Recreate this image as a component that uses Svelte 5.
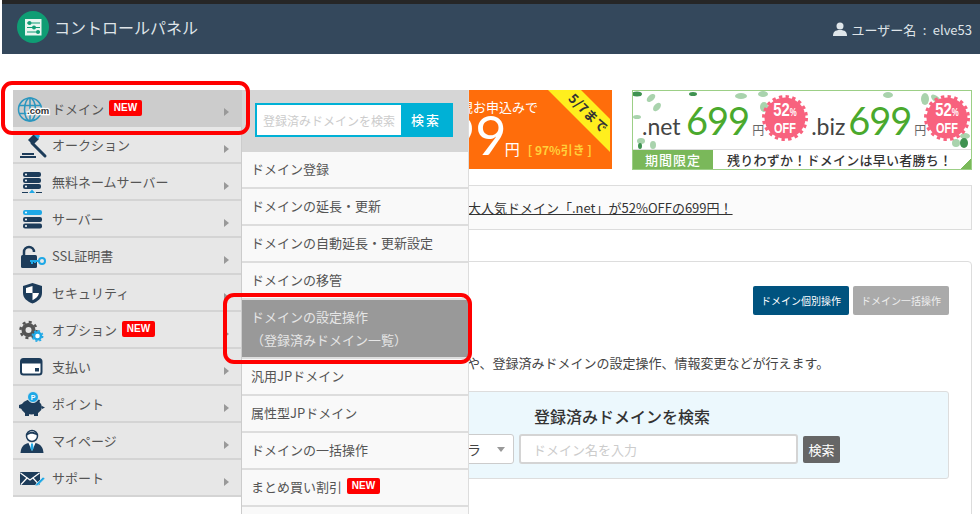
<script>
	const sideItems = [
		{ icon: 'globe', label: 'ドメイン', isNew: true, active: true },
		{ icon: 'hammer', label: 'オークション' },
		{ icon: 'dns', label: '無料ネームサーバー' },
		{ icon: 'server', label: 'サーバー' },
		{ icon: 'lock', label: 'SSL証明書' },
		{ icon: 'shield', label: 'セキュリティ' },
		{ icon: 'gears', label: 'オプション', isNew: true },
		{ icon: 'card', label: '支払い' },
		{ icon: 'pig', label: 'ポイント' },
		{ icon: 'person', label: 'マイページ' },
		{ icon: 'mail', label: 'サポート' }
	];

	const subItems = [
		{ label: 'ドメイン登録' },
		{ label: 'ドメインの延長・更新' },
		{ label: 'ドメインの自動延長・更新設定' },
		{ label: 'ドメインの移管' },
		{ label: 'ドメインの設定操作', sub: '（登録済みドメイン一覧）', active: true },
		{ label: '汎用JPドメイン' },
		{ label: '属性型JPドメイン' },
		{ label: 'ドメインの一括操作' },
		{ label: 'まとめ買い割引', isNew: true },
		{ label: '' }
	];

	const navy = '#1d3c5a';
	const sky = '#1fa8e6';
</script>

{#snippet icon(name)}
	<svg class="ico" viewBox="0 0 36 35" width="36" height="35" aria-hidden="true">
		{#if name === 'globe'}
			<g fill="none" stroke="#2b96bf" stroke-width="1.5">
				<circle cx="14" cy="18.5" r="11.5" />
				<ellipse cx="14" cy="18.5" rx="5.5" ry="11.5" />
				<path d="M14 7v23M3 14.5h22M3 22.5h22" />
			</g>
			<text x="11" y="23" class="com">.com</text>
		{:else if name === 'hammer'}
			<path d="M16 16l13 13" stroke={navy} stroke-width="3" stroke-linecap="round" />
			<path d="M12 13l6-6 5 5-6 6z" fill={navy} />
			<path d="M17 7l3-2 4 4-2 3z" fill={sky} />
			<path d="M6 26h12v2H6zM4 29h16v2H4z" fill={navy} />
		{:else if name === 'dns'}
			<g fill={navy}>
				<rect x="7" y="8" width="18" height="5" rx="2" />
				<rect x="7" y="14" width="18" height="5" rx="2" />
				<rect x="7" y="20" width="18" height="5" rx="2" />
				<path d="M6 28h6v1H6zM20 28h6v1h-6z" />
			</g>
			<g fill="#fff">
				<circle cx="10" cy="10.5" r="1" />
				<circle cx="10" cy="16.5" r="1" />
				<circle cx="10" cy="22.5" r="1" />
			</g>
			<path d="M16 25.5l3 3.5h-6z" fill={sky} />
		{:else if name === 'server'}
			<rect x="7" y="9" width="19" height="5" rx="2" fill={sky} />
			<rect x="7" y="16" width="19" height="5" rx="2" fill={navy} />
			<rect x="7" y="22.5" width="19" height="5" rx="2" fill={navy} />
			<g fill="#fff">
				<circle cx="10" cy="11.5" r="1" />
				<circle cx="10" cy="18.5" r="1" />
				<circle cx="10" cy="25" r="1" />
			</g>
		{:else if name === 'lock'}
			<path d="M8 18v-4a5 5 0 0 1 10 0" fill="none" stroke={navy} stroke-width="2.5" />
			<rect x="5" y="17" width="16" height="13" rx="1.5" fill={navy} />
			<circle cx="26" cy="23" r="3" fill="none" stroke={sky} stroke-width="2" />
			<path d="M23 23h-9M16 23v3M19 23v2" stroke={sky} stroke-width="2" fill="none" />
		{:else if name === 'shield'}
			<path d="M16.5 8l9.5 3v7c0 5-4 8.5-9.500 10.500C11 26.500 7 23 7 18v-7z" fill={navy} />
			<path d="M16.5 11v7H10v-5zM16.500 18H23c-.5 3.500-3 5.500-6.500 7.200z" fill="#fff" />
		{:else if name === 'gears'}
			<circle cx="12.5" cy="18" r="5" fill="none" stroke="#555" stroke-width="4" />
			<circle cx="12.5" cy="18" r="8" fill="none" stroke="#555" stroke-width="2.5" stroke-dasharray="3 3.280" />
			<circle cx="21.5" cy="24" r="3.500" fill="#fff" stroke={sky} stroke-width="2.5" />
			<circle cx="21.5" cy="24" r="5.200" fill="none" stroke={sky} stroke-width="1.5" stroke-dasharray="2 2.080" />
		{:else if name === 'card'}
			<rect x="5" y="10" width="20.5" height="15.5" rx="2.5" fill="#fff" stroke={navy} stroke-width="2" />
			<rect x="5" y="11" width="20" height="3.5" fill={navy} />
			<rect x="19" y="19" width="4" height="3.5" fill={navy} />
		{:else if name === 'pig'}
			<ellipse cx="15.5" cy="21" rx="10.5" ry="7.5" fill={navy} />
			<path d="M3 19l3-1v5l-3-1zM26 20l3 1.500-3 1.500zM9 26h4v4H9zM18 26h4v4h-4zM20 13l4 1-1 4z" fill={navy} />
			<circle cx="17" cy="11" r="5.5" fill={sky} stroke="#e7e7e7" stroke-width="1" />
			<text x="14.8" y="13.5" class="coin">P</text>
		{:else if name === 'person'}
			<circle cx="16" cy="13" r="5.5" fill="#fff" stroke={navy} stroke-width="1.5" />
			<path d="M10.5 12.5c1-5 10-5 11 0-3-1.500-6-2-7.500-1.500z" fill={navy} />
			<path d="M4.5 30c.5-6 3-9 8-10h7c5 1 7.500 4 8 10z" fill={navy} />
			<path d="M12.5 20h7l-3.500 8z" fill="#fff" />
			<path d="M15 20.5h2l.5 5-1.500 2.500-1.500-2.500z" fill={sky} />
		{:else if name === 'mail'}
			<rect x="4" y="12" width="20" height="13" rx="1" fill={navy} />
			<path d="M4.5 13l9.5 7 9.500-7M5 24.500l6.500-7M23 24.500l-6.500-7" fill="none" stroke="#fff" stroke-width="1.2" />
			<path d="M20 24l7-7 2 1.500-7 7-3 .5z" fill={sky} stroke="#e7e7e7" stroke-width=".6" />
		{/if}
	</svg>
{/snippet}

{#snippet burst()}
	<svg class="burst" viewBox="0 0 46 46" width="46" height="46" aria-hidden="true">
		<circle cx="23" cy="23" r="20.5" fill="#f8627e" />
		<circle cx="23" cy="23" r="21.5" fill="none" stroke="#f8627e" stroke-width="3" stroke-dasharray="3.400 3.350" />
	</svg>
{/snippet}

{#snippet offer()}
	<div class="off">
		{@render burst()}
		<span class="off-pct">52<small>%</small></span>
		<span class="off-word">OFF</span>
	</div>
{/snippet}

<div class="page">
	<header class="top">
		<div class="brand">
			<svg viewBox="0 0 32 32" width="32" height="32" aria-hidden="true">
				<circle cx="16" cy="16" r="16" fill="#0f9d74" />
				<rect x="8" y="8" width="16.5" height="16.5" fill="#e9f6f0" />
				<path d="M10 12h13M10 16.500h13M10 21h13" stroke="#0f9d74" stroke-width="1" />
				<circle cx="12.5" cy="12" r="2" fill="#0f9d74" />
				<circle cx="17" cy="16.5" r="2" fill="#0f9d74" />
				<circle cx="21" cy="21" r="2" fill="#0f9d74" />
			</svg>
			<span>コントロールパネル</span>
		</div>
		<div class="user">
			<svg viewBox="0 0 14 14" width="14" height="14" aria-hidden="true">
				<circle cx="7" cy="4" r="3.5" fill="#dfe6ea" />
				<path d="M0 14c0-4 2-6 7-6s7 2 7 6z" fill="#dfe6ea" />
			</svg>
			<span>ユーザー名 : elve53</span>
		</div>
	</header>

	<main class="main">
		<div class="banners">
			<div class="promo">
				<p class="promo-lead">新規お申込みで</p>
				<p class="promo-price"><b>99</b><i>円</i><em>[ 97%引き ]</em></p>
				<svg class="ribbon" viewBox="0 0 64 62" width="64" height="62" aria-hidden="true">
					<path d="M0 0h33l29 29v33z" fill="#ffef1e" />
				</svg>
				<span class="ribbon-text">5/7まで</span>
			</div>
			<div class="sale">
				<svg class="leaves" viewBox="0 0 338 60" width="338" height="60" aria-hidden="true">
					<g fill="#a9d3ad">
						<ellipse cx="24" cy="16" rx="5" ry="3" transform="rotate(-50 24 16)" />
						<ellipse cx="18" cy="7" rx="5" ry="3" transform="rotate(-40 18 7)" />
						<ellipse cx="131" cy="16" rx="4" ry="5" />
						<ellipse cx="108" cy="5" rx="6" ry="3" />
						<ellipse cx="130" cy="3" rx="5" ry="3" />
						<ellipse cx="292" cy="8" rx="4" ry="6" />
						<ellipse cx="303" cy="8" rx="6" ry="3" transform="rotate(40 303 8)" />
						<ellipse cx="255" cy="4" rx="5" ry="3" />
						<ellipse cx="332" cy="45" rx="5" ry="3" />
						<ellipse cx="323" cy="52" rx="4" ry="4" />
						<ellipse cx="8" cy="50" rx="4" ry="3" />
						<ellipse cx="20" cy="54" rx="3" ry="4" />
						<ellipse cx="4" cy="26" rx="4" ry="2" />
					</g>
					<g fill="#3f9251">
						<ellipse cx="4" cy="3" rx="5" ry="2.5" />
						<ellipse cx="60" cy="3" rx="4" ry="2" />
						<ellipse cx="331" cy="52" rx="4" ry="5" />
						<ellipse cx="7" cy="55" rx="2" ry="3" />
					</g>
				</svg>
				<div class="sale-row">
					<span class="tld">.net</span><span class="num">699</span><span class="yen">円</span>
					{@render offer()}
					<span class="tld biz">.biz</span><span class="num">699</span><span class="yen">円</span>
					{@render offer()}
				</div>
				<div class="sale-foot">
					<span class="sale-tag">期間限定</span>
					<span class="sale-copy">残りわずか！ドメインは早い者勝ち！</span>
				</div>
			</div>
		</div>

		<div class="notice"><a href="#top">大人気ドメイン「.net」が52%OFFの699円！</a></div>

		<section class="panel">
			<div class="tabs">
				<button class="tab on">ドメイン個別操作</button>
				<button class="tab">ドメイン一括操作</button>
			</div>
			<p class="desc">や、登録済みドメインの設定操作、情報変更などが行えます。</p>
			<div class="finder">
				<h2>登録済みドメインを検索</h2>
				<div class="finder-row">
					<div class="select"><span>ラ</span><i></i></div>
					<input class="domain" type="text" placeholder="ドメイン名を入力" />
					<button class="go">検索</button>
				</div>
			</div>
		</section>
	</main>

	<nav class="side">
		{#each sideItems as item}
			<div class="side-row" class:active={item.active}>
				{@render icon(item.icon)}
				<span class="side-label">{item.label}</span>
				{#if item.isNew}<span class="new">NEW</span>{/if}
				<span class="arrow"></span>
			</div>
		{/each}
	</nav>

	<div class="sub">
		<div class="sub-search">
			<div class="sub-box">
				<input type="text" placeholder="登録済みドメインを検索" />
				<span>検索</span>
			</div>
		</div>
		{#each subItems as item}
			<div class="sub-row" class:active={item.active}>
				<div class="sub-line">
					<span>{item.label}</span>
					{#if item.isNew}<span class="new">NEW</span>{/if}
				</div>
				{#if item.sub}<div class="sub-line">{item.sub}</div>{/if}
			</div>
		{/each}
	</div>

	<div class="ring ring-a"></div>
	<div class="ring ring-b"></div>
</div>

<style>
	:global(body) {
		margin: 0;
		background: #fff;
	}

	.page {
		position: relative;
		width: 980px;
		height: 514px;
		overflow: hidden;
		font-family: 'Noto Sans CJK JP', 'Liberation Sans', sans-serif;
		font-size: 13px;
		color: #444;
	}

	.top {
		display: flex;
		align-items: center;
		justify-content: space-between;
		box-sizing: border-box;
		height: 54px;
		margin-left: 2px;
		padding: 0 8px 0 15px;
		background: linear-gradient(#262626 4px, #34485c 4px);
		color: #dfe4e8;
	}

	.brand {
		display: flex;
		align-items: center;
		gap: 5px;
		font-size: 16px;
	}

	.user {
		display: flex;
		align-items: center;
		gap: 5px;
		margin-top: 4px;
		word-spacing: 3.5px;
	}

	.main {
		padding: 36px 8px 0 272px;
	}

	.banners {
		display: flex;
		gap: 20px;
	}

	.promo {
		position: relative;
		flex: none;
		box-sizing: border-box;
		width: 340px;
		height: 79px;
		padding-left: 175px;
		background: #ff6d0b;
		color: #fff;
		overflow: hidden;
	}

	.promo p {
		margin: 0;
		white-space: nowrap;
	}

	.promo-lead {
		margin-top: 7px !important;
		font-size: 13px;
		line-height: 20px;
	}

	.promo-price {
		display: flex;
		align-items: baseline;
		margin-top: -9px !important;
		margin-left: -3px !important;
		height: 54px;
	}

	.promo-price b {
		font-family: 'Lato', sans-serif;
		font-size: 54px;
		font-weight: 400;
		line-height: 54px;
	}

	.promo-price i {
		margin-left: -2px;
		font-size: 15px;
		font-style: normal;
	}

	.promo-price em {
		margin-left: 8px;
		font-size: 12px;
		font-weight: 700;
		font-style: normal;
		color: #ffd03b;
	}

	.ribbon {
		position: absolute;
		top: 0;
		right: 0;
	}

	.ribbon-text {
		position: absolute;
		top: 14px;
		right: -1px;
		transform: rotate(45deg);
		font-size: 13px;
		font-weight: 700;
		line-height: 18px;
		letter-spacing: 0.5px;
		color: #333;
		white-space: nowrap;
	}

	.sale {
		position: relative;
		flex: none;
		display: flex;
		flex-direction: column;
		box-sizing: border-box;
		width: 340px;
		height: 80px;
		border: 1px solid #9ccf86;
		background: #fff;
		overflow: hidden;
	}

	.leaves {
		position: absolute;
		top: 0;
		left: 0;
	}

	.sale-row {
		position: relative;
		display: flex;
		align-items: baseline;
		height: 59px;
		padding-left: 9px;
		box-sizing: border-box;
		padding-top: 7px;
		white-space: nowrap;
	}

	.tld {
		width: 44px;
		font-family: 'Lato', sans-serif;
		font-size: 23px;
		color: #444;
	}

	.biz {
		margin-left: 3px;
		width: 37px;
	}

	.num {
		font-family: 'Lato', sans-serif;
		font-size: 38px;
		line-height: 44px;
		letter-spacing: -1px;
		color: #4aa92d;
	}

	.yen {
		margin-left: 3px;
		font-size: 12px;
		color: #666;
	}

	.off {
		position: relative;
		flex: none;
		align-self: flex-start;
		width: 46px;
		height: 46px;
		margin: -3px 0 0 -2px;
		color: #fff;
		text-align: center;
		font-weight: 700;
	}

	.burst {
		position: absolute;
		top: 0;
		left: 0;
	}

	.off-pct,
	.off-word {
		position: relative;
		display: block;
		font-family: 'Liberation Sans', sans-serif;
		transform: scaleX(0.78);
	}

	.off-pct {
		padding-top: 5px;
		font-size: 19px;
		line-height: 19px;
	}

	.off-pct small {
		font-size: 10px;
	}

	.off-word {
		font-size: 14px;
		line-height: 13px;
	}

	.sale-foot {
		position: relative;
		display: flex;
		flex: 1;
		border-top: 1px solid #ddd;
		background: linear-gradient(135deg, #fff 97%, #7ab95a 97%);
	}

	.sale-tag {
		width: 80px;
		background: #7ab85a;
		color: #fff;
		font-size: 13px;
		font-weight: 500;
		letter-spacing: 1px;
		line-height: 19px;
		text-align: center;
	}

	.sale-copy {
		margin-left: 14px;
		font-size: 13px;
		font-weight: 500;
		color: #333;
		line-height: 19px;
		letter-spacing: 0.25px;
	}

	.notice {
		box-sizing: border-box;
		height: 45px;
		margin-top: 15px;
		padding-left: 195px;
		border: 1px solid #ddd;
		background: #fbfbfb;
		line-height: 44px;
	}

	.notice a {
		color: #333;
		text-decoration: underline;
	}

	.panel {
		box-sizing: border-box;
		height: 300px;
		margin-top: 31px;
		padding: 24px 22px 0;
		border: 1px solid #ddd;
		border-radius: 4px;
	}

	.tabs {
		display: flex;
		justify-content: flex-end;
		gap: 4px;
	}

	.tab {
		width: 96px;
		height: 29px;
		padding: 0;
		border: 0;
		border-radius: 2px;
		background: #aaa;
		color: #eee;
		font: inherit;
		font-size: 10px;
	}

	.tab.on {
		background: #00537f;
		color: #fff;
	}

	.desc {
		margin: 38px 0 0 172px;
		line-height: 20px;
		color: #444;
		white-space: nowrap;
	}

	.finder {
		box-sizing: border-box;
		width: 654px;
		height: 88px;
		margin-top: 18px;
		padding-top: 12px;
		border: 1px solid #ddd;
		border-radius: 3px;
		background: #ecf8fd;
	}

	.finder h2 {
		margin: 0;
		color: #333;
		font-size: 16px;
		font-weight: 500;
		line-height: 24px;
		text-align: center;
	}

	.finder-row {
		display: flex;
		align-items: flex-start;
		gap: 5px;
		margin: 6px 0 0 12px;
	}

	.select {
		display: flex;
		align-items: center;
		justify-content: flex-end;
		gap: 16px;
		box-sizing: border-box;
		width: 206px;
		height: 30px;
		padding-right: 8px;
		border: 1px solid #ccc;
		border-radius: 3px;
		background: #fff;
		font-size: 14px;
	}

	.select i {
		width: 0;
		height: 0;
		border-left: 4px solid transparent;
		border-right: 4px solid transparent;
		border-top: 5px solid #999;
	}

	.domain {
		box-sizing: border-box;
		width: 279px;
		height: 30px;
		padding: 0 12px;
		border: 2px solid #d4d4d4;
		border-radius: 3px;
		background: #fff;
		font: inherit;
	}

	.domain::placeholder,
	.sub-box input::placeholder {
		color: #ccc;
		opacity: 1;
	}

	.go {
		width: 37px;
		height: 27px;
		margin-top: 2px;
		padding: 0;
		border: 0;
		border-radius: 2px;
		background: #666;
		color: #fff;
		font: inherit;
	}

	.side {
		position: absolute;
		top: 90px;
		left: 13px;
		width: 228px;
		background: #e7e7e7;
	}

	.side-row {
		position: relative;
		display: flex;
		align-items: center;
		box-sizing: border-box;
		height: 37px;
		padding-bottom: 1px;
		border-bottom: 2px solid #d4d4d4;
	}

	.side-row.active {
		background: #ccc;
		border-bottom: 0;
	}

	.ico {
		flex: none;
		margin-left: 3px;
	}

	.ico .com {
		font-family: 'Liberation Sans', sans-serif;
		font-size: 9.5px;
		font-weight: 700;
		fill: #333;
		stroke: #fff;
		stroke-width: 2.5px;
		paint-order: stroke;
	}

	.ico .coin {
		font-family: 'Liberation Sans', sans-serif;
		font-size: 7px;
		font-weight: 700;
		fill: #fff;
	}

	.side-label {
		color: #555;
		white-space: nowrap;
	}

	.new {
		display: inline-block;
		width: 33px;
		margin-left: 5px;
		border-radius: 2px;
		background: #f00;
		color: #fff;
		font-family: 'Liberation Sans', sans-serif;
		font-size: 10px;
		font-weight: 700;
		line-height: 16px;
		text-align: center;
	}

	.arrow {
		position: absolute;
		top: 18px;
		right: 12px;
		width: 0;
		height: 0;
		border-top: 4px solid transparent;
		border-bottom: 4px solid transparent;
		border-left: 5px solid #999;
	}

	.sub {
		position: absolute;
		top: 90px;
		left: 241px;
		box-sizing: border-box;
		width: 228px;
		height: 424px;
		border-left: 1px solid #ccc;
		border-right: 1px solid #ddd;
		background: #f9f9f9;
	}

	.sub-search {
		box-sizing: border-box;
		height: 62px;
		padding: 13px 14px 0 13px;
		background: #d6d6d6;
	}

	.sub-box {
		display: flex;
		box-sizing: border-box;
		width: 198px;
		height: 34px;
		border: 2px solid #00b1d6;
		background: #00b1d6;
	}

	.sub-box input {
		box-sizing: border-box;
		width: 144px;
		height: 30px;
		padding: 0 0 0 6px;
		border: 0;
		background: #fff;
		font: inherit;
		font-size: 12px;
	}

	.sub-box span {
		flex: 1;
		color: #fff;
		font-weight: 500;
		letter-spacing: 2px;
		line-height: 29px;
		text-align: center;
	}

	.sub-row {
		display: flex;
		flex-direction: column;
		justify-content: center;
		box-sizing: border-box;
		min-height: 37px;
		padding: 0 0 3px 9px;
		border-bottom: 2px solid #ddd;
		color: #555;
	}

	.sub-row.active {
		height: 59px;
		padding-bottom: 1px;
		background: #999;
		color: #e6e6e6;
	}

	.sub-line {
		display: flex;
		align-items: center;
		line-height: 23px;
	}

	.sub-line .new {
		margin-left: 5px;
	}

	.ring {
		position: absolute;
		box-sizing: border-box;
		border: 4px solid #f00;
		border-radius: 11px;
		pointer-events: none;
	}

	.ring-a {
		top: 81px;
		left: 1px;
		width: 249px;
		height: 54px;
	}

	.ring-b {
		top: 293px;
		left: 223px;
		width: 249px;
		height: 71px;
	}
</style>
